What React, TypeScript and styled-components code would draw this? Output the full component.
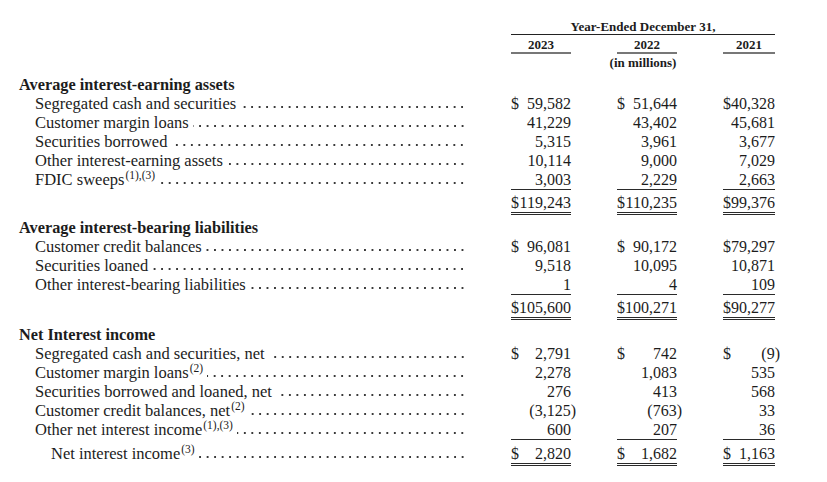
import React from 'react';
import styled, { createGlobalStyle } from 'styled-components';

const Global = createGlobalStyle`
  html, body { margin: 0; padding: 0; background: #ffffff; }
  body {
    font-family: "Liberation Serif", "Times New Roman", serif;
    color: #1c1c1c;
    -webkit-font-smoothing: antialiased;
  }
`;

const Page = styled.div`
  width: 827px;
  height: 482px;
  overflow: hidden;
  box-sizing: border-box;
  padding: 19px 0 0 19px;
`;

const Grid = styled.div`
  display: grid;
  grid-template-columns: 446px 60px 60px 52px;
  column-gap: 46px;
`;

const HeaderGrid = styled(Grid)`
  font-size: 13px;
  font-weight: bold;
  line-height: 15px;
  text-align: center;
`;

const YearSpan = styled.div`
  grid-column: 2 / span 3;
  border-bottom: 1px solid #222;
`;

const YearCell = styled.div<{ $col: number }>`
  grid-column: ${(p) => p.$col};
  margin-top: 2px;
  border-bottom: 2px solid #777;
`;

const Millions = styled.div`
  grid-column: 2 / span 3;
  margin-top: 1px;
`;

const Section = styled.section<{ $gap: number }>`
  margin-top: ${(p) => p.$gap}px;
`;

const Row = styled(Grid)<{ $pad?: number }>`
  font-size: 16px;
  line-height: 19px;
  padding-top: ${(p) => p.$pad ?? 0}px;
`;

const SectionTitle = styled.div`
  grid-column: 1;
  font-size: 16.3px;
  font-weight: bold;
  white-space: nowrap;
`;

const Label = styled.div<{ $indent: number }>`
  grid-column: 1;
  align-self: start;
  height: 19px;
  display: flex;
  font-size: 16.5px;
  padding-left: ${(p) => p.$indent}px;
  white-space: nowrap;
`;

const Leader = styled.span`
  flex: 1;
  margin-left: 4px;
  background-image: radial-gradient(circle, #3a3a3a 0.85px, transparent 1.25px);
  background-size: 7.5px 4px;
  background-repeat: repeat-x;
  background-position: right -1px bottom 4px;
`;

const Sup = styled.sup`
  font-size: 11.5px;
  line-height: 0;
  vertical-align: 0;
  position: relative;
  top: -6px;
  margin-left: 1px;
`;

const Num = styled.div<{ $rule?: 'single' | 'double' }>`
  display: flex;
  justify-content: space-between;
  white-space: nowrap;
  border-bottom: ${(p) =>
    p.$rule === 'single' ? '1px solid #2a2a2a' : p.$rule === 'double' ? '3px double #2a2a2a' : 'none'};
`;

const Hang = styled.span`
  margin-right: -5px;
`;

type Cell = [string, string];
type Line = { label: string; sup?: string; vals: Cell[] };
type Block = { title: string; gap: number; rows: Line[]; total: Line; totalPad: number; totalIndent?: number };

const data: Block[] = [
  {
    title: 'Average interest-earning assets',
    gap: 5,
    rows: [
      { label: 'Segregated cash and securities', vals: [['$', '59,582'], ['$', '51,644'], ['$', '40,328']] },
      { label: 'Customer margin loans', vals: [['', '41,229'], ['', '43,402'], ['', '45,681']] },
      { label: 'Securities borrowed', vals: [['', '5,315'], ['', '3,961'], ['', '3,677']] },
      { label: 'Other interest-earning assets', vals: [['', '10,114'], ['', '9,000'], ['', '7,029']] },
      { label: 'FDIC sweeps', sup: '(1),(3)', vals: [['', '3,003'], ['', '2,229'], ['', '2,663']] },
    ],
    total: { label: '', vals: [['$', '119,243'], ['$', '110,235'], ['$', '99,376']] },
    totalPad: 3,
  },
  {
    title: 'Average interest-bearing liabilities',
    gap: 3,
    rows: [
      { label: 'Customer credit balances', vals: [['$', '96,081'], ['$', '90,172'], ['$', '79,297']] },
      { label: 'Securities loaned', vals: [['', '9,518'], ['', '10,095'], ['', '10,871']] },
      { label: 'Other interest-bearing liabilities', vals: [['', '1'], ['', '4'], ['', '109']] },
    ],
    total: { label: '', vals: [['$', '105,600'], ['$', '100,271'], ['$', '90,277']] },
    totalPad: 3,
  },
  {
    title: 'Net Interest income',
    gap: 5,
    rows: [
      { label: 'Segregated cash and securities, net', vals: [['$', '2,791'], ['$', '742'], ['$', '(9)']] },
      { label: 'Customer margin loans', sup: '(2)', vals: [['', '2,278'], ['', '1,083'], ['', '535']] },
      { label: 'Securities borrowed and loaned, net', vals: [['', '276'], ['', '413'], ['', '568']] },
      { label: 'Customer credit balances, net', sup: '(2)', vals: [['', '(3,125)'], ['', '(763)'], ['', '33']] },
      { label: 'Other net interest income', sup: '(1),(3)', vals: [['', '600'], ['', '207'], ['', '36']] },
    ],
    total: { label: 'Net interest income', sup: '(3)', vals: [['$', '2,820'], ['$', '1,682'], ['$', '1,163']] },
    totalPad: 4,
    totalIndent: 32,
  },
];

const Value = ({ v }: { v: string }) =>
  v.endsWith(')') ? <Hang>{v}</Hang> : <span>{v}</span>;

const Nums = ({ vals, rule }: { vals: Cell[]; rule?: 'single' | 'double' }) => (
  <>
    {vals.map(([cur, v], i) => (
      <Num key={i} $rule={rule}>
        <span>{cur}</span>
        <Value v={v} />
      </Num>
    ))}
  </>
);

const LabelCell = ({ line, indent }: { line: Line; indent: number }) => (
  <Label $indent={indent}>
    {line.label && (
      <>
        <span>
          {line.label}
          {line.sup && <Sup>{line.sup}</Sup>}
        </span>
        <Leader />
      </>
    )}
  </Label>
);

export default function App() {
  return (
    <>
      <Global />
      <Page>
        <HeaderGrid>
          <YearSpan>Year-Ended December 31,</YearSpan>
          <YearCell $col={2}>2023</YearCell>
          <YearCell $col={3}>2022</YearCell>
          <YearCell $col={4}>2021</YearCell>
          <Millions>(in millions)</Millions>
        </HeaderGrid>
        {data.map((b) => (
          <Section key={b.title} $gap={b.gap}>
            <Row>
              <SectionTitle>{b.title}</SectionTitle>
            </Row>
            {b.rows.map((r, i) => (
              <Row key={r.label}>
                <LabelCell line={r} indent={16} />
                <Nums vals={r.vals} rule={i === b.rows.length - 1 ? 'single' : undefined} />
              </Row>
            ))}
            <Row $pad={b.totalPad}>
              <LabelCell line={b.total} indent={b.totalIndent ?? 16} />
              <Nums vals={b.total.vals} rule="double" />
            </Row>
          </Section>
        ))}
      </Page>
    </>
  );
}
